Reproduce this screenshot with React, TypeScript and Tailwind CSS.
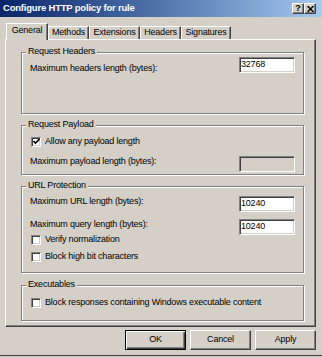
import type { ReactNode } from "react";

// classic win2k chrome helpers
const sunken =
  "border border-t-[#808080] border-l-[#808080] border-b-white border-r-white shadow-[inset_1px_1px_0_#404040,inset_-1px_-1px_0_#d4d0c8]";
const raised =
  "border border-t-white border-l-white border-b-[#404040] border-r-[#404040] shadow-[inset_-1px_-1px_0_#808080]";

function GroupBox({ title, className, children }: { title: string; className: string; children?: ReactNode }) {
  return (
    <div className={`relative w-[283px] border border-[#808080] shadow-[inset_1px_1px_0_#fff,1px_1px_0_#fff] px-[8px] ${className}`}>
      <span className="absolute left-[4px] top-[-7px] bg-[#d4d0c8] px-[2px] leading-[11px]">{title}</span>
      {children}
    </div>
  );
}

function Field({ label, value, disabled, className = "", labelClass = "" }: { label: string; value?: string; disabled?: boolean; className?: string; labelClass?: string }) {
  return (
    <div className={`flex items-start justify-between ${className}`}>
      <span className={`leading-[11px] ${labelClass}`}>{label}</span>
      <div className={`h-[16px] w-[56px] pl-[1px] leading-[13px] ${sunken} ${disabled ? "bg-[#d4d0c8]" : "bg-white"}`}>{value}</div>
    </div>
  );
}

function Check({ label, checked, className = "" }: { label: string; checked?: boolean; className?: string }) {
  return (
    <div className={`flex h-[11px] items-center gap-[4px] pl-[1px] ${className}`}>
      <div className={`flex h-[10px] w-[10px] items-center justify-center bg-white ${sunken}`}>
        {checked && (
          <svg width="7" height="7" viewBox="0 0 7 7">
            <path d="M0.5 3 L2.5 5 L6.5 1" fill="none" stroke="#000" strokeWidth="1.6" />
          </svg>
        )}
      </div>
      <span className="leading-[11px]">{label}</span>
    </div>
  );
}

function Tab({ label, active, className }: { label: string; active?: boolean; className: string }) {
  return (
    <div
      className={`border-l border-t border-r border-l-white border-t-white border-r-[#404040] shadow-[inset_-1px_0_0_#808080] bg-[#d4d0c8] text-center leading-[11px] ${
        active ? "relative z-10 -mb-px h-[17px] pt-[1px]" : "h-[13px]"
      } ${className}`}
    >
      {label}
    </div>
  );
}

function Button({ label, isDefault }: { label: string; isDefault?: boolean }) {
  return (
    <div
      className={`flex h-[20px] w-[61px] items-center justify-center ${
        isDefault
          ? "border border-black shadow-[inset_1px_1px_0_#fff,inset_-1px_-1px_0_#404040,inset_-2px_-2px_0_#808080]"
          : raised
      }`}
    >
      {label}
    </div>
  );
}

export default function App() {
  return (
    <div className="flex h-[358px] w-[322px] flex-col overflow-hidden bg-[#d4d0c8] font-['Liberation_Sans',Arial,sans-serif] text-[9px] tracking-[-0.2px] text-black">
      {/* title bar */}
      <div className="flex h-[17px] shrink-0 items-center justify-between bg-linear-to-r from-[#0a246a] to-[#a6caf0] pl-[3px] pr-[6px]">
        <span className="text-[9.5px] font-bold text-white">Configure HTTP policy for rule</span>
        <div className="flex">
          <div className={`flex h-[11px] w-[12px] items-center justify-center bg-[#d4d0c8] text-[9px] font-bold leading-none ${raised}`}>?</div>
          <div className={`flex h-[11px] w-[12px] items-center justify-center bg-[#d4d0c8] ${raised}`}>
            <svg width="7" height="6" viewBox="0 0 7 6">
              <path d="M0.5 0 L6.5 6 M6.5 0 L0.5 6" stroke="#000" strokeWidth="1.5" />
            </svg>
          </div>
        </div>
      </div>

      {/* tabs */}
      <div className="mt-[6px] flex h-[16px] items-end pl-[6px]">
        <Tab label="General" active className="w-[42px]" />
        <Tab label="Methods" className="w-[41px]" />
        <Tab label="Extensions" className="w-[51px]" />
        <Tab label="Headers" className="w-[41px]" />
        <Tab label="Signatures" className="w-[50px]" />
      </div>

      {/* tab page */}
      <div className="ml-[5px] h-[288px] w-[311px] shrink-0 border-b border-l border-r border-t border-b-[#404040] border-l-white border-r-[#404040] border-t-white pl-[15px] pt-[12px] shadow-[inset_-1px_-1px_0_#808080]">
        <GroupBox title="Request Headers" className="h-[62px] pt-[4px]">
          <Field label="Maximum headers length (bytes):" value="32768" labelClass="mt-[6px]" />
        </GroupBox>

        <GroupBox title="Request Payload" className="mt-[11px] h-[50px] pt-[10px]">
          <Check label="Allow any payload length" checked />
          <Field label="Maximum payload length (bytes):" disabled className="mt-[9px]" />
        </GroupBox>

        <GroupBox title="URL Protection" className="mt-[11px] h-[87px] pt-[9px]">
          <Field label="Maximum URL length (bytes):" value="10240" />
          <Field label="Maximum query length (bytes):" value="10240" className="mt-[7px]" />
          <Check label="Verify normalization" className="-mt-px" />
          <Check label="Block high bit characters" className="mt-[6px]" />
        </GroupBox>

        <GroupBox title="Executables" className="mt-[12px] h-[36px] pt-[11px]">
          <Check label="Block responses containing Windows executable content" />
        </GroupBox>
      </div>

      {/* dialog buttons */}
      <div className="mt-[3px] flex justify-end gap-[4px] pr-[6px]">
        <Button label="OK" isDefault />
        <Button label="Cancel" />
        <Button label="Apply" />
      </div>
      <div className="mt-[5px] h-px bg-[#404040]" />
    </div>
  );
}
